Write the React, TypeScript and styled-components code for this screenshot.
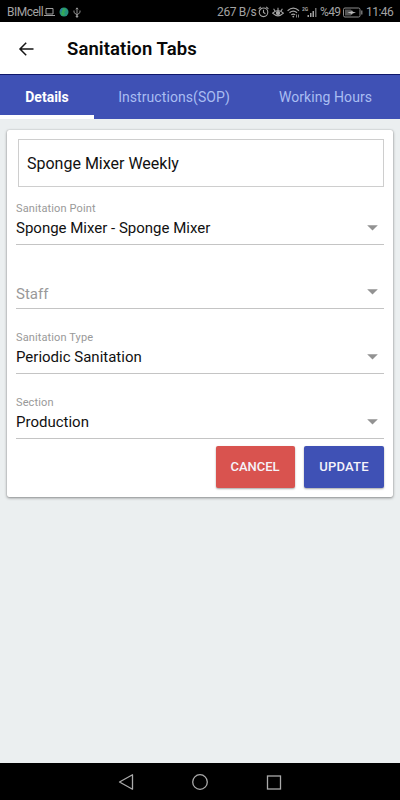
import React from "react";
import styled, { createGlobalStyle } from "styled-components";

const GlobalStyle = createGlobalStyle`
  * { box-sizing: border-box; }
  body { margin: 0; background: #ebeff0; font-family: Roboto, "Liberation Sans", sans-serif; }
`;

const Screen = styled.div`
  width: 400px;
  height: 800px;
  display: flex;
  flex-direction: column;
  background: #ebeff0;
  overflow: hidden;
`;

const StatusBar = styled.div`
  height: 22px;
  flex: none;
  display: flex;
  align-items: center;
  justify-content: space-between;
  padding: 2px 7px 0 7px;
  background: #000;
  color: #a3a3a3;
  font-size: 12px;
  line-height: 20px;
`;

const StatusGroup = styled.div`
  display: flex;
  align-items: center;
  height: 20px;
  white-space: nowrap;
`;

const StatusText = styled.span<{ $width: number; $spacing?: number }>`
  width: ${(p) => p.$width}px;
  letter-spacing: ${(p) => p.$spacing ?? 0}px;
`;

const Glyph = styled.svg<{ $gap?: number }>`
  display: block;
  flex: none;
  margin-right: ${(p) => p.$gap ?? 0}px;
`;

const Header = styled.header`
  height: 53px;
  flex: none;
  display: flex;
  align-items: center;
  padding: 2px 0 0 18px;
  background: #fff;
  border-bottom: 1px solid #10186a;
`;

const Title = styled.h1`
  margin: 0 0 0 33px;
  font-size: 18.5px;
  line-height: 24px;
  font-weight: 600;
  letter-spacing: 0.1px;
  color: #080808;
`;

const TabBar = styled.nav`
  height: 44px;
  flex: none;
  display: flex;
  background: #3f51b5;
`;

const Tab = styled.div<{ $width: number; $active?: boolean }>`
  width: ${(p) => p.$width}px;
  display: flex;
  align-items: center;
  justify-content: center;
  padding-top: ${(p) => (p.$active ? 4 : 0)}px;
  font-size: 14px;
  letter-spacing: ${(p) => (p.$active ? 0 : 0.07)}px;
  font-weight: ${(p) => (p.$active ? 700 : 400)};
  color: ${(p) => (p.$active ? "#fff" : "#a9bdf2")};
  border-bottom: ${(p) => (p.$active ? "4px solid #fff" : "0")};
`;

const Content = styled.main`
  flex: 1;
  padding: 11px 7px 0;
`;

const Card = styled.section`
  height: 367px;
  padding: 9px 9px 0;
  background: #fff;
  border-radius: 2px;
  box-shadow: 0 1px 3px rgba(0, 0, 0, 0.42), 0 0 1px rgba(0, 0, 0, 0.3);
`;

const NameInput = styled.div`
  height: 48px;
  margin: 0 0 0 2px;
  padding: 0 8px;
  display: flex;
  align-items: center;
  border: 1px solid #cecece;
  font-size: 16px;
  color: #111;
`;

const Field = styled.div<{ $height: number }>`
  height: ${(p) => p.$height}px;
  display: flex;
  flex-direction: column;
  justify-content: flex-end;
  border-bottom: 1px solid #c4c4c4;
`;

const Label = styled.div`
  font-size: 11px;
  line-height: 14px;
  letter-spacing: 0.12px;
  color: #999;
`;

const ValueRow = styled.div<{ $muted?: boolean }>`
  height: 28px;
  padding: 0 6px 4px 0;
  display: flex;
  align-items: center;
  justify-content: space-between;
  font-size: 15px;
  color: ${(p) => (p.$muted ? "#999" : "#111")};
`;

const Value = styled.span<{ $muted?: boolean }>`
  padding-top: ${(p) => (p.$muted ? 3 : 0)}px;
`;

const Actions = styled.div`
  display: flex;
  justify-content: flex-end;
  gap: 9.5px;
  padding-top: 6.5px;
`;

const Button = styled.button<{ $width: number; $color: string; $spacing?: number }>`
  width: ${(p) => p.$width}px;
  height: 42px;
  padding: 0;
  border: 0;
  border-radius: 2px;
  background: ${(p) => p.$color};
  color: #f5f3fa;
  font: 500 13px Roboto, sans-serif;
  letter-spacing: ${(p) => p.$spacing ?? 0}px;
  box-shadow: 0 1px 2px rgba(0, 0, 0, 0.35);
`;

const NavBar = styled.footer`
  height: 37px;
  flex: none;
  display: flex;
  align-items: center;
  justify-content: center;
  gap: 58px;
  background: #000;
`;

const fields = [
  { label: "Sanitation Point", value: "Sponge Mixer - Sponge Mixer", height: 58 },
  { label: "", value: "Staff", height: 64 },
  { label: "Sanitation Type", value: "Periodic Sanitation", height: 65 },
  { label: "Section", value: "Production", height: 65 },
];

const Caret = () => (
  <Glyph width="11" height="6" viewBox="0 0 11 6">
    <path d="M0.2 0.3H10.8L5.5 5.6Z" fill="#929292" />
  </Glyph>
);

export default function App() {
  return (
    <>
      <GlobalStyle />
      <Screen>
        <StatusBar>
          <StatusGroup>
            <StatusText $width={37} $spacing={-0.5}>BIMcell</StatusText>
            <Glyph $gap={4} width="11" height="10" viewBox="0 0 11 10" fill="none" stroke="#a0a0a0">
              <path d="M2 1.5H9V7H2ZM0 8.5H11" />
            </Glyph>
            <Glyph $gap={4} width="10" height="10" viewBox="0 0 10 10">
              <circle cx="5" cy="5" r="4.5" fill="#25917d" />
              <path d="M2 2L5 1L7 3L5 5L6 7L4 9L2 7L3 5Z" fill="#35a957" />
              <path d="M1 3L3 1L4 2L2 5Z" fill="#287ca4" />
            </Glyph>
            <Glyph width="8" height="11" viewBox="0 0 8 11" fill="none" stroke="#a0a0a0" strokeWidth="0.9">
              <path d="M4 10V1M2.8 2.3L4 0.8L5.2 2.3M1 3.5V5.5L4 8L7 5.5V3.5" />
              <circle cx="4" cy="9.5" r="0.8" fill="#a0a0a0" />
            </Glyph>
          </StatusGroup>
          <StatusGroup>
            <StatusText $width={41} $spacing={-0.35}>267 B/s</StatusText>
            <Glyph $gap={3} width="11" height="12" viewBox="0 0 11 12" fill="none" stroke="#a3a3a3" strokeWidth="1.1">
              <circle cx="5.5" cy="6.3" r="4.3" />
              <path d="M5.5 3.8V6.5L7.4 7.7M0.6 2.8L2.8 0.9M10.4 2.8L8.2 0.9" />
            </Glyph>
            <Glyph $gap={3} width="12" height="11" viewBox="0 0 12 11" fill="none" stroke="#a3a3a3" strokeWidth="1.1">
              <path d="M0.6 6.2Q6 0.8 11.4 6.2Q6 11.5 0.6 6.2ZM6 3.2V0.8M3 4L1.6 1.8M9 4L10.4 1.8" />
              <circle cx="6" cy="6.1" r="1.6" fill="#a3a3a3" />
            </Glyph>
            <Glyph $gap={2} width="13" height="11" viewBox="0 0 13 11" fill="none" stroke="#a3a3a3" strokeWidth="1.2">
              <path d="M0.6 3.7Q6.3 -1.4 12 3.7M2.5 5.8Q6.3 2.5 10 5.8M4.3 7.9Q6.3 6.2 8.2 7.9" />
              <circle cx="6.3" cy="9.6" r="0.9" fill="#a3a3a3" stroke="none" />
              <path d="M9.5 7.5V10.5M11.5 7.5V10.5" strokeWidth="0.8" />
            </Glyph>
            <Glyph $gap={3} width="15" height="12" viewBox="0 0 15 12" fill="#a3a3a3">
              <text x="0" y="4.5" fontSize="5" fontWeight="700">2G</text>
              <path d="M5.5 9H7V11H5.5ZM8 7H9.5V11H8ZM10.5 5H12V11H10.5Z" />
              <path d="M13 2H14.5V11H13Z" fill="#707070" />
            </Glyph>
            <StatusText $width={23} $spacing={-0.6}>%49</StatusText>
            <Glyph $gap={3} width="20" height="11" viewBox="0 0 20 11" fill="none" stroke="#8e8e8e">
              <rect x="0.5" y="1" width="16.5" height="9" rx="1.5" />
              <path d="M2 2.5H8V8.5H2Z" fill="#555" stroke="none" />
              <path d="M18.8 3.5V7.5" strokeWidth="1.2" />
              <path d="M4.5 5.5L8.2 4.5L8.8 3L9.8 4.8L13 5.5L9.5 6.6L8.8 8L7.9 6.4Z" fill="#b8b8b8" stroke="none" />
            </Glyph>
            <StatusText $width={27} $spacing={-0.55}>11:46</StatusText>
          </StatusGroup>
        </StatusBar>
        <Header>
          <Glyph width="16" height="14" viewBox="0 0 16 14" fill="none" stroke="#151515" strokeWidth="1.5">
            <path d="M15.5 7H2M8.2 0.8L2 7L8.2 13.2" />
          </Glyph>
          <Title>Sanitation Tabs</Title>
        </Header>
        <TabBar>
          <Tab $width={94} $active>Details</Tab>
          <Tab $width={160}>Instructions(SOP)</Tab>
          <Tab $width={143}>Working Hours</Tab>
        </TabBar>
        <Content>
          <Card>
            <NameInput>Sponge Mixer Weekly</NameInput>
            {fields.map((field) => (
              <Field key={field.value} $height={field.height}>
                {field.label && <Label>{field.label}</Label>}
                <ValueRow $muted={!field.label}>
                  <Value $muted={!field.label}>{field.value}</Value>
                  <Caret />
                </ValueRow>
              </Field>
            ))}
            <Actions>
              <Button $width={79} $color="#d9534f">CANCEL</Button>
              <Button $width={80} $color="#3f51b5" $spacing={0.25}>UPDATE</Button>
            </Actions>
          </Card>
        </Content>
        <NavBar>
          <Glyph width="16" height="16" viewBox="0 0 16 16" fill="none" stroke="#aaa" strokeWidth="1.3" strokeLinejoin="round">
            <path d="M14.5 0.8V15.2L1.5 8Z" />
          </Glyph>
          <Glyph width="16" height="16" viewBox="0 0 16 16" fill="none" stroke="#aaa" strokeWidth="1.3">
            <circle cx="8" cy="8" r="7.3" />
          </Glyph>
          <Glyph width="16" height="16" viewBox="0 0 16 16" fill="none" stroke="#aaa" strokeWidth="1.3">
            <rect x="1.5" y="2" width="13" height="13" />
          </Glyph>
        </NavBar>
      </Screen>
    </>
  );
}
